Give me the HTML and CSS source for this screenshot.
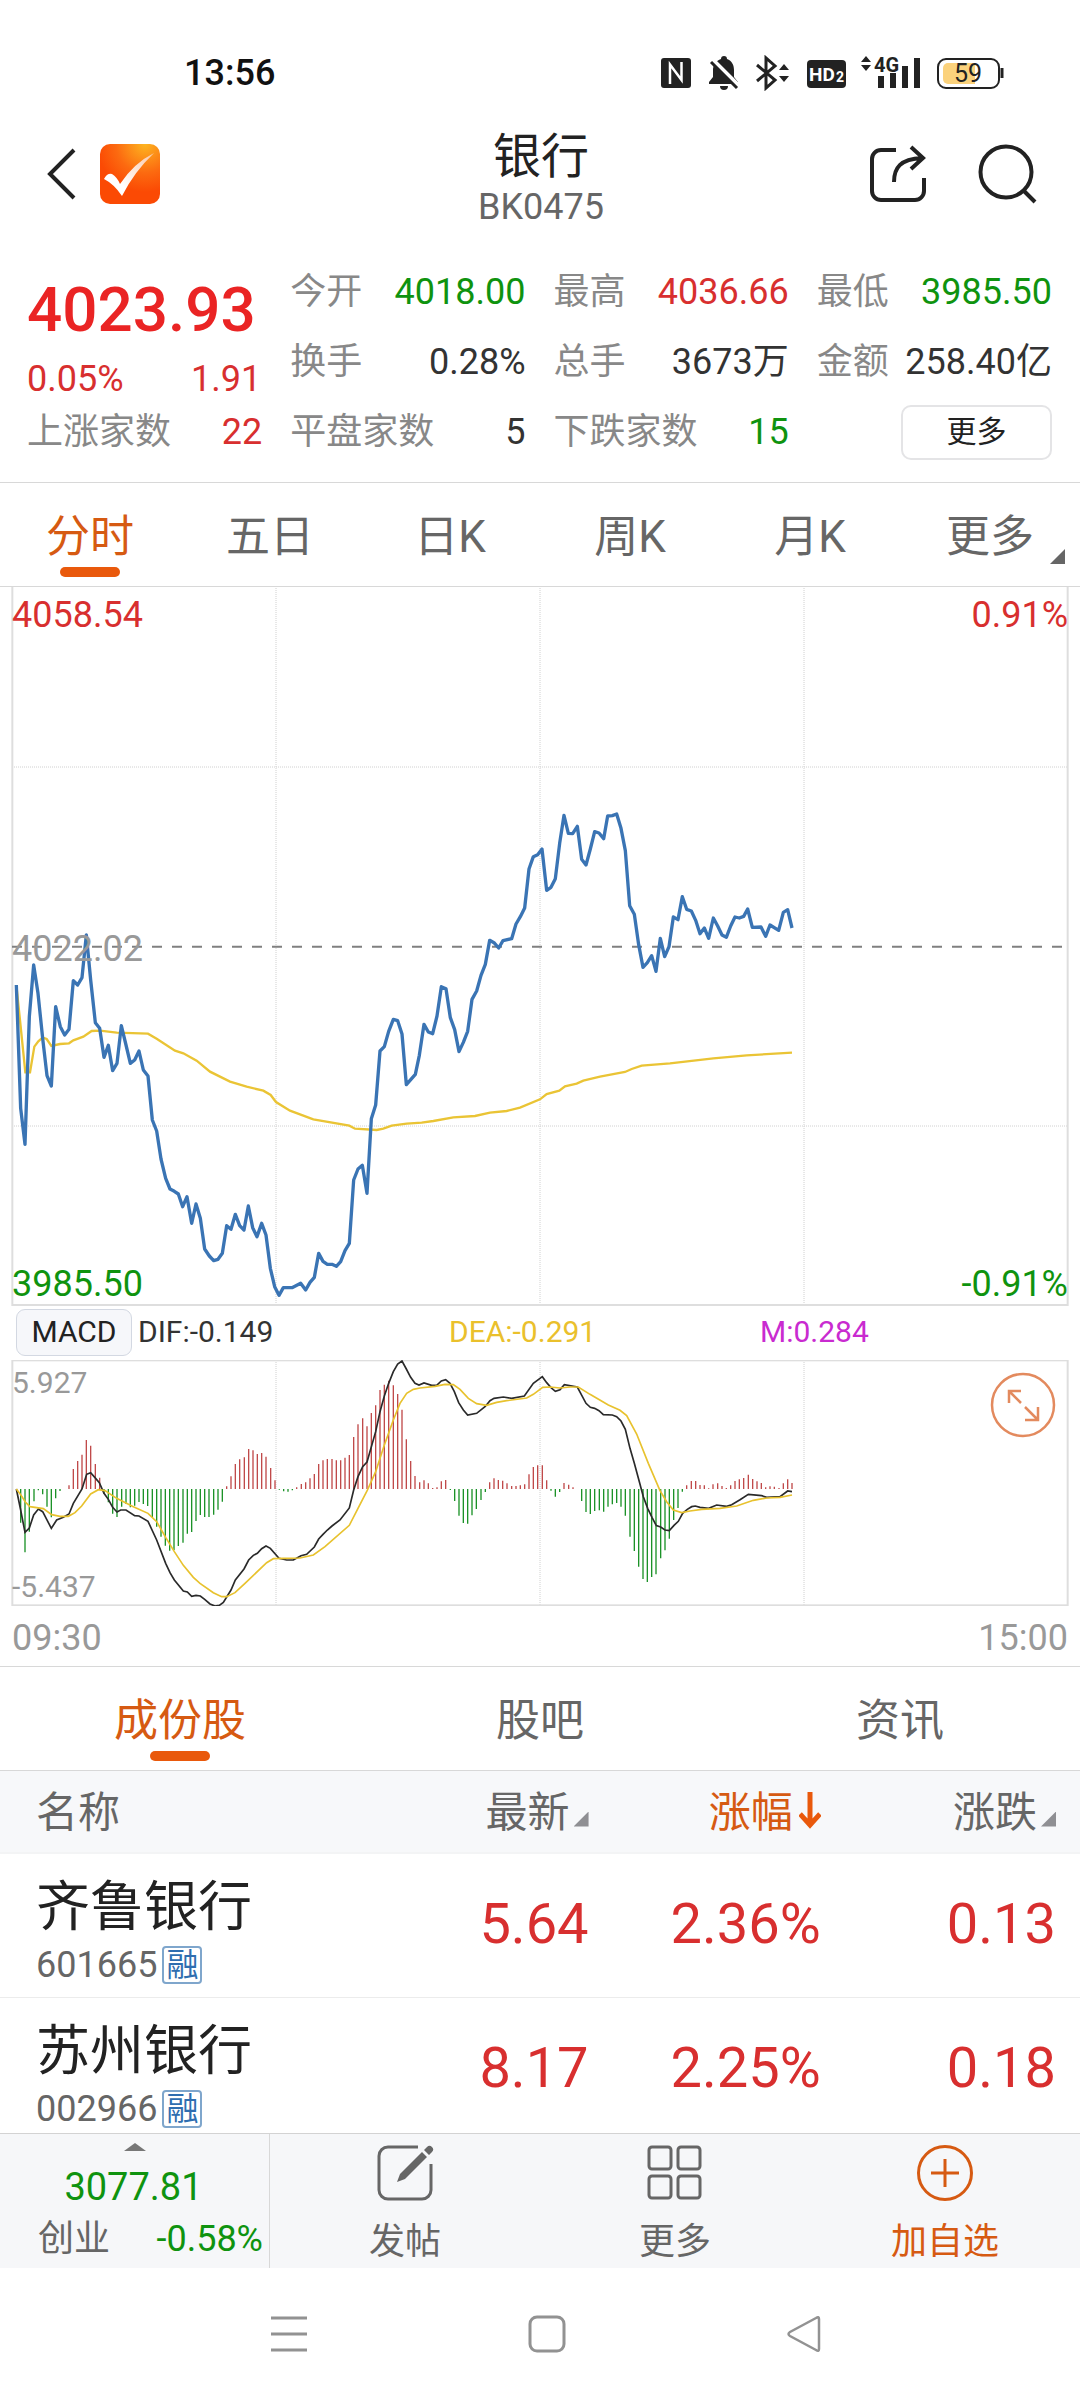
FILE: index.html
```html
<!DOCTYPE html>
<html lang="zh-CN">
<head>
<meta charset="utf-8">
<meta name="viewport" content="width=device-width, initial-scale=1">
<title>银行 BK0475</title>
<link rel="stylesheet" href="styles.css">
</head>
<body>
<div class="app">
  <div class="status">
    <span class="clock">13:56</span>
    <svg class="status-icons" width="346" height="36" viewBox="0 0 346 36" aria-hidden="true">
      <rect x="1" y="3" width="30" height="30" rx="3" fill="#222"/>
      <path d="M10 29V9.500L21.500 25V7" fill="none" stroke="#fff" stroke-width="2.500"/>
      <path d="M64 1a3 3 0 0 1 3 3c5 2 7 6 7 11v7l4 5v2H49v-2l4-5v-7c0-5 3-9 8-11a3 3 0 0 1 3-3zM60 31h8a4 4 0 0 1-8 0z" fill="#222"/>
      <path d="M53 5l26 26" stroke="#fff" stroke-width="4"/>
      <path d="M51 7l26 26" stroke="#222" stroke-width="3"/>
      <path d="M97 10l18 15-9 8V3l9 8-18 15" fill="none" stroke="#222" stroke-width="3"/>
      <path d="M119 15l5-6 5 6zM119 21l5 6 5-6z" fill="#222"/>
      <rect x="147" y="5" width="39" height="28" rx="4" fill="#222"/>
      <text class="hd" x="149" y="26">HD</text><text class="hd2" x="176" y="27">2</text>
      <path d="M201 7l5-6 5 6zM201 10l5 6 5-6z" fill="#222"/>
      <path d="M218 21h6v12h-6zM230 18h6v15h-6zM242 11h6v22h-6zM254 3h6v30h-6z" fill="#222"/>
      <text class="net" x="214" y="17">4G</text>
      <rect x="278" y="4" width="61" height="29" rx="8" fill="#fff" stroke="#222" stroke-width="2"/>
      <path d="M288 8h27v21h-27a5 5 0 0 1-5-5V13a5 5 0 0 1 5-5z" fill="#fbd27c"/>
      <path d="M342 13v10" stroke="#222" stroke-width="3"/>
      <text class="batt" x="294" y="27">59</text>
    </svg>
  </div>

  <header class="head">
    <div class="head-left">
      <button class="icon-btn" aria-label="返回"><svg width="32" height="54" viewBox="0 0 32 54"><path d="M29 3L5 27l24 24" fill="none" stroke="#222" stroke-width="4"/></svg></button>
      <svg class="logo" width="60" height="60" viewBox="0 0 60 60" aria-hidden="true">
        <defs>
          <radialGradient id="lg" cx=".75" cy="0" r=".8"><stop offset="0" stop-color="#fdb520"/><stop offset=".6" stop-color="#fc6a10"/><stop offset="1" stop-color="#fb4a04"/></radialGradient>
          <linearGradient id="ck" x1="0" y1="1" x2="1" y2="0"><stop offset=".3" stop-color="#fff"/><stop offset="1" stop-color="#fbc8a8"/></linearGradient>
        </defs>
        <rect width="60" height="60" rx="10" fill="url(#lg)"/>
        <path d="M4 35q3-6 8-5 5 3 8 10Q34 19 54 9 34 28 22 52 14 40 4 35z" fill="url(#ck)"/>
      </svg>
    </div>
    <div class="title"><h1>银行</h1><p>BK0475</p></div>
    <div class="head-right">
      <button class="icon-btn" aria-label="分享"><svg width="60" height="60" viewBox="0 0 60 60"><path d="M27 6H12a9 9 0 0 0-9 9v32a9 9 0 0 0 9 9h34a9 9 0 0 0 9-9V34M25 38c0-14 6-23 28-24M42 3l12 11-12 11" fill="none" stroke="#222" stroke-width="4"/></svg></button>
      <button class="icon-btn" aria-label="搜索"><svg width="60" height="60" viewBox="0 0 60 60"><circle cx="29" cy="28" r="25.500" fill="none" stroke="#222" stroke-width="4"/><path d="M46 46l12 12" stroke="#222" stroke-width="4"/></svg></button>
    </div>
  </header>

  <section class="quote">
    <div class="price">
      <strong>4023.93</strong>
      <div class="pair up"><span>0.05%</span><span class="chg">1.91</span></div>
    </div>
    <div class="pair"><span class="key">今开</span><span class="down">4018.00</span></div>
    <div class="pair"><span class="key">最高</span><span class="up">4036.66</span></div>
    <div class="pair"><span class="key">最低</span><span class="down">3985.50</span></div>
    <div class="pair"><span class="key">换手</span><span>0.28%</span></div>
    <div class="pair"><span class="key">总手</span><span>3673万</span></div>
    <div class="pair"><span class="key">金额</span><span>258.40亿</span></div>
    <div class="pair"><span class="key">上涨家数</span><span class="up">22</span></div>
    <div class="pair"><span class="key">平盘家数</span><span>5</span></div>
    <div class="pair"><span class="key">下跌家数</span><span class="down">15</span></div>
    <div class="pair end"><button class="more">更多</button></div>
  </section>

  <nav class="tabs">
    <button class="on">分时</button><button>五日</button><button>日K</button><button>周K</button><button>月K</button><button class="drop">更多</button>
  </nav>

  <section class="chart">
    <svg viewBox="0 3 3240 2157" aria-label="分时走势">
      <path class="grid" d="M828 0V2160M1620 0V2160M2412 0V2160M36 543H3204M36 1620H3204"/>
      <path class="frame" d="M37 0V2157H3203V0"/>
      <path class="mid" d="M36 1082H3204"/>
      <polyline class="avg" points="49,1197 62,1322 76,1459 90,1459 103,1382 115,1366 128,1355 140,1359 154,1380 180,1374 207,1372 220,1363 250,1352 275,1335 300,1334 350,1340 444,1343 470,1358 525,1394 550,1402 590,1424 630,1457 690,1487 740,1502 790,1514 812,1527 828,1548 870,1574 940,1600 1048,1619 1065,1628 1130,1632 1150,1628 1175,1619 1220,1613 1265,1610 1300,1605 1360,1594 1425,1590 1470,1580 1520,1575 1560,1565 1620,1540 1640,1524 1678,1514 1695,1501 1730,1493 1750,1484 1800,1472 1875,1458 1895,1449 1925,1439 2010,1432 2140,1417 2240,1408 2376,1400"/>
      <polyline class="now" points="49,1197 62,1567 75,1675 88,1292 101,1137 114,1222 128,1357 141,1469 154,1500 167,1262 181,1322 194,1347 207,1330 220,1184 233,1197 246,1175 259,1047 272,1182 286,1310 299,1327 312,1414 325,1378 338,1454 351,1432 364,1319 378,1377 391,1432 404,1422 417,1395 430,1452 444,1470 457,1602 470,1635 483,1719 497,1777 510,1809 523,1816 535,1824 548,1862 561,1832 575,1912 588,1854 601,1897 614,1989 628,2010 641,2024 654,2020 667,2002 680,1919 693,1930 706,1885 719,1919 732,1932 745,1860 758,1925 771,1952 785,1912 798,1947 811,2047 824,2102 837,2128 850,2105 876,2105 902,2092 917,2112 930,2089 943,2074 956,2002 969,2026 982,2035 996,2035 1009,2041 1022,2027 1035,1994 1048,1972 1061,1782 1074,1749 1087,1738 1101,1822 1114,1598 1127,1557 1140,1395 1153,1382 1166,1336 1180,1300 1193,1304 1206,1344 1219,1496 1246,1465 1258,1408 1272,1315 1285,1338 1298,1343 1311,1290 1324,1202 1338,1208 1351,1295 1364,1331 1377,1397 1390,1369 1403,1336 1416,1240 1430,1215 1443,1168 1456,1135 1469,1063 1482,1070 1496,1086 1509,1064 1535,1058 1548,1014 1561,992 1574,966 1587,849 1600,812 1613,806 1626,789 1640,913 1653,904 1666,878 1679,772 1692,688 1705,742 1718,743 1732,721 1745,820 1758,837 1771,789 1784,737 1797,741 1811,758 1823,690 1837,689 1850,684 1863,727 1876,794 1889,959 1903,985 1916,1076 1929,1144 1942,1130 1955,1109 1968,1156 1981,1057 1994,1112 2007,1082 2020,993 2034,1001 2047,932 2060,970 2074,975 2087,1003 2100,1043 2113,1026 2126,1057 2140,996 2153,1020 2166,1047 2179,1054 2192,1020 2205,993 2218,996 2231,991 2243,969 2257,1024 2283,1023 2297,1051 2310,1017 2336,1033 2350,979 2363,971 2376,1026"/>
    </svg>
    <span class="tag top left up">4058.54</span><span class="tag top right up">0.91%</span>
    <span class="tag middle left">4022.02</span>
    <span class="tag bottom left down">3985.50</span><span class="tag bottom right down">-0.91%</span>
  </section>

  <div class="legend">
    <button class="pill">MACD</button>
    <span>DIF:-0.149</span><span class="dea-text">DEA:-0.291</span><span class="m-text">M:0.284</span>
  </div>

  <section class="chart macd">
    <svg viewBox="0 210 3240 738" aria-label="MACD">
      <path class="grid" d="M828 210V948M1620 210V948M2412 210V948"/>
      <rect class="frame" x="37" y="211" width="3166" height="735"/>
      <path class="bars-up" id="barsUp"/><path class="bars-down" id="barsDown"/>
      <polyline class="dif" points="49,597 62,660 75,727 88,714 101,675 115,657 128,665 154,715 170,690 190,682 207,672 220,640 246,597 260,553 272,548 285,563 298,578 312,610 325,628 338,652 351,666 362,660 378,660 404,677 417,678 444,694 470,750 497,820 510,848 523,870 550,903 562,906 575,919 588,916 601,918 614,928 630,942 645,948 658,946 670,937 693,900 706,870 732,837 746,810 760,796 772,790 785,776 798,768 811,775 837,805 860,810 880,810 903,797 920,793 943,771 956,747 969,733 982,720 996,708 1020,690 1048,654 1061,600 1074,560 1088,530 1101,516 1127,425 1140,365 1153,318 1166,280 1180,245 1193,222 1206,213 1219,237 1232,262 1245,280 1257,285 1272,279 1295,286 1310,286 1324,273 1337,269 1350,280 1363,305 1376,338 1390,360 1403,375 1430,370 1455,350 1470,332 1482,325 1510,321 1535,325 1573,318 1600,280 1627,260 1640,278 1653,293 1666,304 1680,299 1693,284 1732,291 1758,340 1771,352 1784,355 1797,362 1810,374 1837,375 1850,380 1863,393 1876,418 1890,475 1903,520 1916,568 1930,620 1943,655 1956,682 1969,707 1982,711 1995,720 2008,722 2022,706 2035,694 2048,670 2062,658 2075,650 2086,648 2100,652 2126,655 2150,645 2180,649 2195,644 2220,629 2245,613 2285,617 2300,622 2340,620 2363,603 2376,605"/>
      <polyline class="dea" points="49,597 62,614 76,636 90,650 130,656 155,674 180,679 205,679 225,668 245,648 272,612 295,599 315,602 350,625 400,650 444,670 470,695 497,742 523,785 550,826 580,862 600,880 640,908 665,920 680,920 705,908 735,880 800,818 820,806 850,805 900,804 940,795 975,770 1048,706 1074,655 1101,603 1127,545 1153,465 1180,390 1200,340 1220,310 1240,298 1260,294 1305,289 1335,283 1360,284 1380,298 1405,325 1430,341 1460,346 1490,337 1520,332 1580,324 1600,313 1628,292 1650,291 1680,294 1710,291 1735,291 1770,313 1825,345 1860,361 1880,377 1910,432 1945,520 1980,602 2000,635 2020,660 2045,668 2070,663 2105,658 2160,655 2210,648 2260,631 2300,624 2340,622 2376,615"/>
    </svg>
    <span class="tag small top left">5.927</span>
    <span class="tag small bottom left">-5.437</span>
    <button class="expand icon-btn" aria-label="全屏"><svg width="66" height="66" viewBox="0 0 66 66"><g fill="none" stroke="#e38a5e" stroke-width="2.500"><circle cx="33" cy="33" r="31"/><path d="M31 31L19 19M19 31V19h12M35 35l13 13M48 35v13H35"/></g></svg></button>
  </section>
  <div class="times"><span>09:30</span><span>15:00</span></div>

  <nav class="tabs">
    <button class="on">成份股</button><button>股吧</button><button>资讯</button>
  </nav>

  <main class="list">
    <table>
      <thead>
        <tr><th>名称</th><th><span class="sort">最新</span></th><th class="sorted">涨幅<svg width="22" height="38" viewBox="3 0 22 38" aria-hidden="true"><path d="M14 1v33M4 23l10 11 10-11" fill="none" stroke="#e9590c" stroke-width="5"/></svg></th><th><span class="sort">涨跌</span></th></tr>
      </thead>
      <tbody>
        <tr><td><div class="name">齐鲁银行</div><div class="code">601665<i>融</i></div></td><td>5.64</td><td>2.36%</td><td>0.13</td></tr>
        <tr><td><div class="name">苏州银行</div><div class="code">002966<i>融</i></div></td><td>8.17</td><td>2.25%</td><td>0.18</td></tr>
      </tbody>
    </table>
  </main>

  <footer class="bar">
    <button class="index">
      <svg width="22" height="8" viewBox="0 0 22 8" aria-hidden="true"><path d="M0 8L11 0l11 8z" fill="#777"/></svg>
      <span class="idx-val">3077.81</span>
      <span class="idx-row"><span>创业</span><span class="down">-0.58%</span></span>
    </button>
    <button class="act"><svg width="58" height="58" viewBox="0 0 58 58"><path d="M42 3H12a9 9 0 0 0-9 9v34a9 9 0 0 0 9 9h34a9 9 0 0 0 9-9V20" fill="none" stroke="#666" stroke-width="3"/><path d="M21 38l3-8L46 8l5 5-22 22zM48 6l3-3a3 3 0 0 1 5 5l-3 3z" fill="#666"/></svg>发帖</button>
    <button class="act"><svg width="58" height="58" viewBox="0 0 58 58"><g fill="none" stroke="#666" stroke-width="3"><rect x="3" y="3" width="22" height="22" rx="3"/><rect x="32" y="3" width="22" height="22" rx="3"/><rect x="3" y="32" width="22" height="22" rx="3"/><rect x="32" y="32" width="22" height="22" rx="3"/></g></svg>更多</button>
    <button class="act add"><svg width="58" height="58" viewBox="0 0 58 58"><g fill="none" stroke="#d65a12" stroke-width="3"><circle cx="29" cy="29" r="26.500"/><path d="M29 15v28M15 29h28"/></g></svg>加自选</button>
  </footer>

  <div class="sysnav">
    <button class="icon-btn" aria-label="菜单"><svg width="40" height="40" viewBox="0 0 40 40"><path d="M2 4h36M2 20h36M2 36h36" stroke="#929292" stroke-width="3"/></svg></button>
    <button class="icon-btn" aria-label="主页"><svg width="40" height="40" viewBox="0 0 40 40"><rect x="3" y="3" width="34" height="34" rx="7" fill="none" stroke="#929292" stroke-width="3"/></svg></button>
    <button class="icon-btn" aria-label="后退"><svg width="40" height="40" viewBox="0 0 40 40"><path d="M34 5v30q0 3-3 1L5 22q-3-2 0-4L31 4q3-2 3 1z" fill="none" stroke="#929292" stroke-width="2.500"/></svg></button>
  </div>
</div>
<script src="chart.js"></script>
</body>
</html>
```
FILE: chart.js
```javascript
// MACD histogram, one value per minute from 09:30; positive rises above the zero line.
const values = [
  0,-101,-190,-128,-37,-4,-16,-53,-85,-28,-6,0,11,60,84,103,147,130,75,34,
  -15,-40,-74,-84,-53,-45,-55,-50,-39,-45,-51,-85,-113,-143,-170,-185,-183,-171,-161,-134,
  -129,-96,-78,-84,-84,-77,-62,-38,8,38,75,89,95,120,116,105,108,97,63,26,
  -2,-7,-8,-4,5,15,20,32,45,75,86,90,90,86,86,94,102,156,194,212,
  188,228,251,297,313,325,311,285,238,149,84,39,20,26,17,3,5,23,27,-3,
  -36,-80,-102,-104,-79,-60,-33,-9,20,32,27,25,17,9,9,11,14,44,66,71,
  71,26,-5,-23,-9,18,13,5,0,-36,-69,-75,-66,-64,-68,-53,-46,-42,-53,-80,
  -143,-186,-233,-270,-279,-264,-256,-208,-184,-149,-93,-57,-8,11,24,24,12,11,2,14,
  17,9,3,11,24,29,33,43,30,23,18,5,8,7,3,17,29,18
];
const zero = 597, start = 49, step = 13.147;
let up = "", down = "";
values.forEach((v, i) => {
  const bar = `M${Math.round(start + i * step)} ${zero}v${-v}`;
  if (v > 0) up += bar;
  if (v < 0) down += bar;
});
document.getElementById("barsUp").setAttribute("d", up);
document.getElementById("barsDown").setAttribute("d", down);
```
FILE: styles.css
```css
* { box-sizing: border-box; }
body {
  margin: 0;
  background: #fff;
  color: #333;
  font-family: Roboto, "Noto Sans CJK SC", sans-serif;
  font-size: 36px;
}
h1, p { margin: 0; font-weight: 400; }
button { margin: 0; padding: 0; border: 0; background: none; font: inherit; color: inherit; }
svg { display: block; }
.up { color: #d82f2f; }
.down { color: #0f930f; }
.icon-btn { display: block; }

.app { display: flex; flex-direction: column; height: 100vh; }
.app > * { flex: none; }

.status {
  display: flex;
  justify-content: space-between;
  align-items: center;
  padding: 51px 74px 0 184px;
  height: 94px;
}
.clock { color: #111; font-weight: 500; }
.hd { font: 700 19px Roboto, sans-serif; fill: #fff; }
.hd2 { font: 700 14px Roboto, sans-serif; fill: #fff; }
.net { font: 700 20px Roboto, sans-serif; fill: #222; }
.batt { font: 400 25px Roboto, sans-serif; fill: #222; }

.head {
  display: grid;
  grid-template-columns: 1fr auto 1fr;
  align-items: center;
  height: 160px;
  padding: 0 43px 0 45px;
}
.head-left { display: flex; align-items: center; gap: 23px; }
.head-right { display: flex; justify-content: flex-end; gap: 48px; }
.title { padding-top: 15px; text-align: center; line-height: 50px; }
.title h1 { font-size: 48px; color: #222; }
.title p { color: #666; }

.quote {
  display: grid;
  grid-template-columns: repeat(4, 1fr);
  grid-auto-rows: 70px;
  column-gap: 28px;
  padding: 3px 28px 15px 27px;
  border-bottom: 1px solid #d8d8d8;
}
.price { grid-row: span 2; padding-top: 20px; }
.price strong { display: block; font-size: 62px; font-weight: 500; line-height: 66px; color: #ea2424; }
.price .pair { margin-top: 18px; line-height: 36px; }
.price .chg { padding-right: 1px; }
.pair { display: flex; justify-content: space-between; line-height: 70px; white-space: nowrap; }
.key { color: #888; }
.pair.end { justify-content: flex-end; align-items: center; }
.more { width: 151px; height: 55px; border: 2px solid #e4e4e6; border-radius: 10px; font-size: 30px; line-height: 50px; color: #222; }

.tabs { display: flex; height: 104px; border-bottom: 1px solid #d8d8d8; }
.tabs button {
  position: relative;
  flex: 1;
  padding-top: 4px;
  font-size: 44px;
  line-height: 64px;
  color: #666;
}
.tabs .on { color: #d65a12; }
.tabs .on::after {
  content: "";
  position: absolute;
  left: 50%;
  bottom: 9px;
  width: 60px;
  height: 10px;
  margin-left: -30px;
  border-radius: 5px;
  background: #e9590c;
}
.drop::after, .sort::after {
  content: "";
  width: 15px;
  height: 15px;
  background: #666;
  clip-path: polygon(100% 0, 100% 100%, 0 100%);
}
.drop::after { position: absolute; right: 15px; bottom: 22px; }

.chart { position: relative; }
.chart svg { width: 100%; height: auto; }
.chart .icon-btn svg { width: 66px; }
.chart path, .chart polyline, .chart rect { fill: none; }
.chart .frame { stroke: #dedede; stroke-width: 6; }
.chart .grid { stroke: #d0d0d0; stroke-width: 3; stroke-dasharray: 3 3; }
.chart .mid { stroke: #808080; stroke-width: 6; stroke-dasharray: 30 30; }
.chart .now { stroke: #3a74b4; stroke-width: 10; stroke-linejoin: round; }
.chart .avg { stroke: #eac435; stroke-width: 7; }
.chart .dif { stroke: #2a2a2a; stroke-width: 5; }
.chart .dea { stroke: #e8c22e; stroke-width: 5; }
.chart .bars-up { stroke: #c04a4a; stroke-width: 4; }
.chart .bars-down { stroke: #1c9228; stroke-width: 4; }

.tag { position: absolute; line-height: 40px; }
.left { left: 12px; }
.right { right: 12px; }
.top { top: 8px; }
.middle { top: 50%; margin-top: -18px; color: #999; }
.bottom { bottom: 2px; }
.small { font-size: 30px; color: #999; }
.small.top { top: 3px; }
.small.bottom { bottom: -1px; }
.expand { position: absolute; top: 12px; right: 24px; }

.legend {
  display: grid;
  grid-template-columns: 116px repeat(3, 1fr);
  align-items: center;
  height: 54px;
  padding: 0 15px 2px 16px;
  font-size: 30px;
}
.legend span { padding-left: 6px; line-height: 48px; }
.pill { height: 47px; border: 1px solid #d3d8e2; border-radius: 9px; background: #f6f7fa; line-height: 42px; color: #222; }
.dea-text { color: #eac02c; }
.m-text { color: #c92bd0; }

.times {
  display: flex;
  justify-content: space-between;
  height: 61px;
  padding: 0 12px;
  border-bottom: 1px solid #d8d8d8;
  line-height: 64px;
  color: #999;
}

.list { flex: 1 1 0; min-height: 0; overflow: hidden; }
table { width: 100%; border-collapse: collapse; table-layout: fixed; }
th, td { padding: 0; text-align: right; font-weight: 400; }
th { height: 82px; padding-top: 2px; background: #f7f8fa; font-size: 42px; line-height: 60px; color: #666; border-bottom: 2px solid #f3f4f5; }
th:first-child { width: 33%; }
th:nth-child(2), th:nth-child(3) { width: 21.5%; }
th:first-child, td:first-child { padding-left: 36px; text-align: left; }
th:last-child, td:last-child { padding-right: 24px; }
.sort::after { display: inline-block; margin-left: 4px; background: #8f8f93; }
.sorted { color: #d65a12; }
th svg { display: inline-block; margin-left: 6px; vertical-align: -2px; }
td { height: 144px; padding-bottom: 3px; border-bottom: 1px solid #ececec; font-size: 56px; line-height: 64px; color: #d82f2f; }
td:first-child { padding-top: 12px; padding-bottom: 0; }
.name { font-size: 54px; line-height: 60px; color: #222; }
.code { display: flex; align-items: center; gap: 5px; padding-top: 8px; font-size: 36px; line-height: 38px; color: #666; }
.code i {
  width: 40px;
  height: 38px;
  border: 2px solid #7fa6cc;
  border-radius: 4px;
  font-style: normal;
  font-size: 32px;
  line-height: 34px;
  text-align: center;
  color: #2f6eb0;
}

.bar { display: grid; grid-template-columns: repeat(4, 1fr); height: 135px; border-top: 1px solid #d3d3d3; background: #f6f7f9; color: #666; }
.index { display: flex; flex-direction: column; align-items: center; padding: 9px 6px 0 38px; border-right: 1px solid #d8d8d8; }
.index > svg { margin-right: 32px; }
.idx-val { margin: 14px 34px 0 0; font-size: 38px; line-height: 44px; color: #0f930f; }
.idx-row { display: flex; justify-content: space-between; width: 100%; margin-top: 6px; line-height: 48px; }
.act { display: flex; flex-direction: column; align-items: center; padding-top: 10px; line-height: 48px; }
.act svg { margin-bottom: 16px; }
.add { color: #d65a12; }

.sysnav { display: flex; justify-content: center; align-items: center; gap: 218px; height: 132px; padding-left: 14px; }
```
